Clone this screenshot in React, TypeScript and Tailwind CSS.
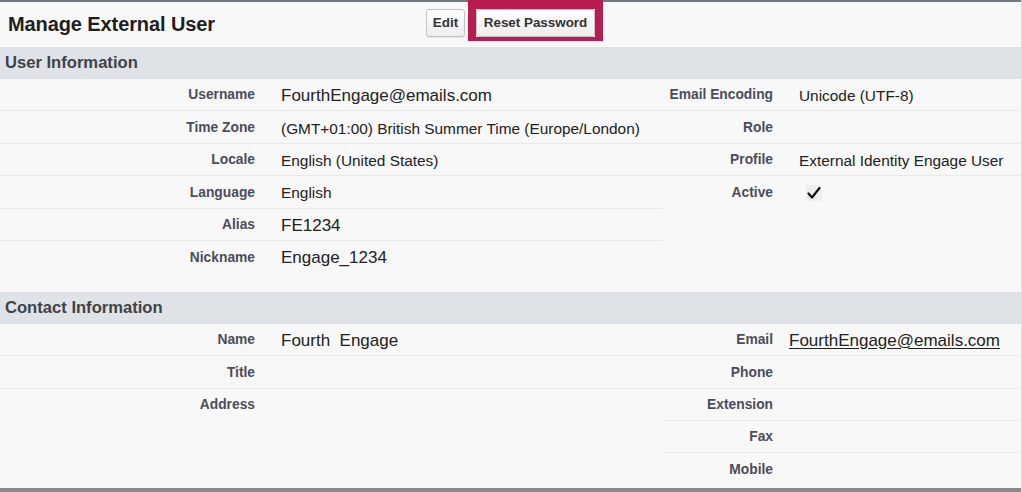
import React from "react";

type Cell = { label?: string; value?: React.ReactNode; big?: boolean };
type Row = { l: Cell; r: Cell; lb: boolean; rb: boolean };

const Check = () => (
  <span className="inline-flex items-center justify-center w-[16px] h-[16px] bg-[#eeeeee] ml-[7px]">
    <svg width="14" height="14" viewBox="0 0 14 14">
      <path d="M1.5 7.5 L5 11.5 L12.5 2" fill="none" stroke="#111" strokeWidth="2.2" strokeLinecap="round" strokeLinejoin="round" />
    </svg>
  </span>
);

const userRows: Row[] = [
  { l: { label: "Username", value: "FourthEngage@emails.com", big: true }, r: { label: "Email Encoding", value: "Unicode (UTF-8)" }, lb: true, rb: true },
  { l: { label: "Time Zone", value: "(GMT+01:00) British Summer Time (Europe/London)" }, r: { label: "Role" }, lb: true, rb: true },
  { l: { label: "Locale", value: "English (United States)" }, r: { label: "Profile", value: "External Identity Engage User" }, lb: true, rb: true },
  { l: { label: "Language", value: "English" }, r: { label: "Active", value: <Check /> }, lb: true, rb: false },
  { l: { label: "Alias", value: "FE1234", big: true }, r: {}, lb: true, rb: false },
  { l: { label: "Nickname", value: "Engage_1234", big: true }, r: {}, lb: false, rb: false },
];

const contactRows: Row[] = [
  { l: { label: "Name", value: "Fourth\u00a0 Engage", big: true }, r: { label: "Email", value: <span className="underline underline-offset-2">FourthEngage@emails.com</span>, big: true }, lb: true, rb: true },
  { l: { label: "Title" }, r: { label: "Phone" }, lb: true, rb: true },
  { l: { label: "Address" }, r: { label: "Extension" }, lb: false, rb: true },
  { l: {}, r: { label: "Fax" }, lb: false, rb: true },
  { l: {}, r: { label: "Mobile" }, lb: false, rb: false },
];

function DataRow({ row, tight }: { row: Row; tight?: boolean }) {
  const lb = row.lb ? "border-b border-[#e9e9e9]" : "";
  const rb = row.rb ? "border-b border-[#e9e9e9]" : "";
  const label = "flex items-center justify-end pr-[13px] pt-[2px] text-[13.8px] font-bold text-[#4b4d5a] h-[32.4px]";
  const value = (c: Cell, pl: string) =>
    `flex items-center ${pl} pt-[2px] h-[32.4px] text-[#222] whitespace-nowrap ${c.big ? "text-[17px]" : "text-[15.4px]"}`;
  return (
    <div className="grid grid-cols-[268px_394px_124px_1fr]">
      <div className={`${label} ${lb}`}>{row.l.label}</div>
      <div className={`${value(row.l, "pl-[13px]")} ${lb}`}>{row.l.value}</div>
      <div className={`${label} ${rb}`}>{row.r.label}</div>
      <div className={`${value(row.r, tight ? "pl-[3px]" : "pl-[13px]")} ${rb}`}>{row.r.value}</div>
    </div>
  );
}

function SectionHeader({ title }: { title: string }) {
  return (
    <div className="h-[32px] shrink-0 bg-[#dfe3e7] flex items-center pl-[5px] pt-[1px] text-[16.6px] font-bold text-[#3f4247]">
      {title}
    </div>
  );
}

export default function App() {
  return (
    <div
      className="w-[1022px] h-[492px] bg-[#f8f8f8] flex flex-col overflow-hidden border-r border-[#dcdcdc]"
      style={{ fontFamily: '"Liberation Sans", Arial, sans-serif' }}
    >
      <div className="h-[2px] bg-[#6f7a84] shrink-0" />
      <div className="relative h-[45px] shrink-0 grid grid-cols-[1fr_auto_1fr] items-center border-b border-[#ffffff]">
        <div className="pl-[8px] text-[20px] font-bold text-[#1e1e1e] tracking-[-0.1px]">Manage External User</div>
        <div className="flex items-start h-full ml-[8px]">
          <button className="mt-[7px] h-[28px] w-[39px] rounded-[3px] border border-[#c4c4c4] bg-gradient-to-b from-[#ffffff] to-[#ededed] text-[13.4px] font-bold text-[#333] shadow-[0_1px_1px_rgba(0,0,0,0.08)]">
            Edit
          </button>
          <div className="ml-[3px] -mt-[2px] border-x-[8px] border-t-[9px] border-b-[4px] border-[#b81c50] flex items-start z-10">
            <button className="h-[28px] w-[119px] rounded-[3px] border border-[#c4c4c4] bg-gradient-to-b from-[#ffffff] to-[#ededed] text-[13.4px] font-bold text-[#333]">
              Reset Password
            </button>
          </div>
        </div>
        <div />
      </div>
      <SectionHeader title="User Information" />
      {userRows.map((r, i) => (
        <DataRow key={i} row={r} />
      ))}
      <div className="h-[18.5px] shrink-0" />
      <SectionHeader title="Contact Information" />
      {contactRows.map((r, i) => (
        <DataRow key={i} row={r} tight />
      ))}
      <div className="flex-1" />
      <div className="h-[4px] bg-[#8a8a8a] shrink-0" />
    </div>
  );
}
